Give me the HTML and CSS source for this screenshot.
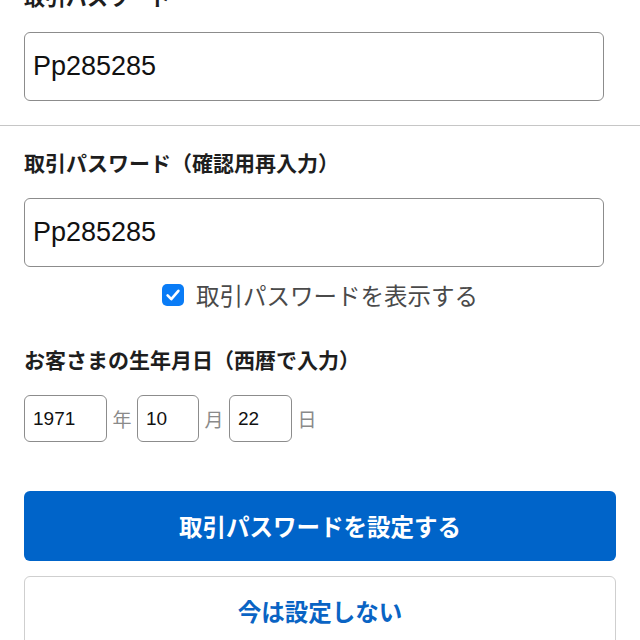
FILE: index.html
```html
<!DOCTYPE html>
<html lang="ja">
<head>
    <meta charset="UTF-8">
    <meta name="viewport" content="width=device-width, initial-scale=1.0">
    <title>取引パスワード設定</title>
    <link rel="stylesheet" href="styles.css">
</head>
<body>
    <div class="page">
        <!-- Password -->
        <section class="field first">
            <label class="field-label" for="pass1">取引パスワード</label>
            <input class="text-input" id="pass1" type="text" value="Pp285285">
        </section>

        <hr class="divider">

        <!-- Password (confirm) -->
        <section class="field">
            <label class="field-label" for="pass2">取引パスワード（確認用再入力）</label>
            <input class="text-input" id="pass2" type="text" value="Pp285285">
            <label class="show-pass">
                <span class="check">
                    <svg width="22" height="22" viewBox="0 0 22 22">
                        <rect x="0" y="0" width="22" height="22" rx="5" fill="#0a7cf6"/>
                        <path d="M5.6 11.4 L9.3 15.2 L16.4 6.8" fill="none" stroke="#fff" stroke-width="2.6" stroke-linecap="round" stroke-linejoin="round"/>
                    </svg>
                </span>
                取引パスワードを表示する
            </label>
        </section>

        <!-- Birthday -->
        <section class="field birthday">
            <label class="field-label">お客さまの生年月日（西暦で入力）</label>
            <div class="birth-row">
                <input class="date-input year" type="text" value="1971">
                <span class="unit">年</span>
                <input class="date-input month" type="text" value="10">
                <span class="unit">月</span>
                <input class="date-input day" type="text" value="22">
                <span class="unit">日</span>
            </div>
        </section>

        <div class="actions">
            <button class="btn btn-primary" type="button">取引パスワードを設定する</button>
            <button class="btn btn-secondary" type="button">今は設定しない</button>
        </div>
    </div>
</body>
</html>
```

FILE: styles.css
```css
body {
    margin: 0;
    padding: 0;
    background: #fff;
    color: #222;
    font-family: "Noto Sans CJK JP", "Liberation Sans", sans-serif;
    overflow: hidden;
}

.page {
    margin-top: -18px;
}

.field {
    padding: 22px 24px 0;
}

.field.first {
    padding-top: 0;
    padding-bottom: 24px;
}

.field-label {
    display: block;
    font-size: 21px;
    line-height: 28px;
    font-weight: bold;
    color: #1e1e1e;
    margin-bottom: 22px;
}

.text-input {
    display: block;
    box-sizing: border-box;
    width: 580px;
    height: 69px;
    margin: 0;
    padding: 0 8px;
    border: 1.5px solid #8c8c8c;
    border-radius: 6px;
    background: #fff;
    color: #111;
    font-family: "Liberation Sans", Arial, sans-serif;
    font-size: 27px;
    outline: none;
}

.divider {
    margin: 0;
    border: none;
    border-top: 1px solid #c6c6c6;
}

.show-pass {
    display: flex;
    align-items: center;
    justify-content: center;
    gap: 12px;
    height: 30px;
    margin-top: 13px;
    width: 592px;
    font-size: 23.5px;
    color: #4a4a4a;
}

.check {
    display: flex;
    width: 22px;
    height: 22px;
}

.field.birthday {
    padding-top: 35px;
}

.birth-row {
    display: flex;
    align-items: center;
    gap: 5.5px;
}

.date-input {
    box-sizing: border-box;
    height: 47px;
    margin: 0;
    padding: 0 8px;
    border: 1.5px solid #8c8c8c;
    border-radius: 6px;
    background: #fff;
    color: #111;
    font-family: "Liberation Sans", Arial, sans-serif;
    font-size: 19px;
    outline: none;
}

.date-input.year {
    width: 83px;
}

.date-input.month {
    width: 62px;
}

.date-input.day {
    width: 63px;
}

.unit {
    font-size: 19px;
    color: #8a8a8a;
}

.actions {
    display: flex;
    flex-direction: column;
    gap: 15px;
    padding: 49px 24px 0;
}

.btn {
    box-sizing: border-box;
    width: 592px;
    height: 70px;
    margin: 0;
    border-radius: 6px;
    font-family: "Noto Sans CJK JP", sans-serif;
    font-size: 23.5px;
    font-weight: bold;
    cursor: pointer;
}

.btn-primary {
    background: #0064c9;
    border: none;
    color: #fff;
}

.btn-secondary {
    background: #fff;
    border: 1.5px solid #cfcfcf;
    color: #0a64c4;
}
```
